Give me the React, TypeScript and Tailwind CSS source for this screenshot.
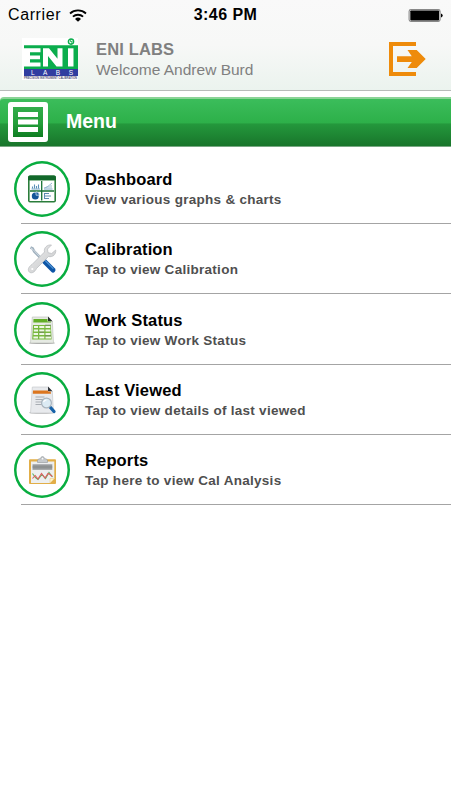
import type { ReactNode } from "react";

type MenuEntry = {
  title: string;
  subtitle: string;
  icon: ReactNode;
};

const DashboardIcon = () => (
  <svg width="56" height="56" viewBox="0 0 56 56" className="block">
    <rect x="14" y="14.500" width="28" height="27" rx="2" fill="#2b7d3b" />
    <path d="M14 19v-2.500q0-2 2-2h24q2 0 2 2V19z" fill="#12682a" />
    <rect x="15.600" y="19.500" width="24.800" height="20.500" fill="#fff" />
    <path d="M27.700 20v19.500M16 30h24" stroke="#197235" strokeWidth="1.300" />
    <path d="M18.500 27.500v-2M20.500 27.500v-4M22.500 27.500v-2.500M24.500 27.500v-4" stroke="#5b8fb8" strokeWidth="1.100" />
    <path d="M17.500 28h8.500M30 28h8.500" stroke="#5c8fb8" strokeWidth=".8" />
    <path d="M30 27l3-1 2-1.500 3-2.500M33 27v-1.500M35 27v-2M37 27v-3" stroke="#7ba5c2" strokeWidth=".8" fill="none" />
    <circle cx="21.300" cy="35" r="3.500" fill="#14559a" />
    <path d="M22 34.200v-3.400a3.500 3.500 0 0 1 3.400 3.400z" fill="#1c61a6" stroke="#fff" strokeWidth=".6" />
    <path d="M30.500 32v6M31 32.500h4M31 35h6M31 37.500h4" stroke="#5d8bb0" strokeWidth="1" />
  </svg>
);

const CalibrationIcon = () => (
  <svg width="56" height="56" viewBox="0 0 56 56" className="block">
    <defs>
      <linearGradient id="wrench" x1="0" y1="0" x2="1" y2="1">
        <stop offset="0" stopColor="#ededed" />
        <stop offset="1" stopColor="#c6c8ca" />
      </linearGradient>
    </defs>
    <path d="M16.500 16.500l2.200 1 1.500 3 9 9" stroke="#9eafbd" strokeWidth="2.600" fill="none" />
    <path d="M17 17l2 1.500 9.500 10" stroke="#dce4ea" strokeWidth=".9" fill="none" />
    <path d="M30 30l9 9" stroke="#0d55a6" strokeWidth="5" strokeLinecap="round" />
    <path d="M31 29.300l8 8" stroke="#5195d5" strokeWidth="1.200" strokeLinecap="round" />
    <path
      d="M37.500 14c-4.500-.6-8 3-7 7L18 33.500c-4 2.500-4.500 6-2.500 7.700 2.200 1.500 5.300 0 7-3.700L34.500 25.500c4.200 1 7.700-2 7.200-6.500l-4 3.500-3.700-.800-.5-3.700z"
      fill="url(#wrench)"
      stroke="#b6b9bb"
      strokeWidth=".7"
    />
    <circle cx="18.300" cy="38" r="1.100" fill="#fff" />
  </svg>
);

const WorkStatusIcon = () => (
  <svg width="56" height="56" viewBox="0 0 56 56" className="block">
    <ellipse cx="28" cy="41" rx="13" ry="1" fill="#aaa" />
    <path d="M18.300 15H34l4.300 4.300L39.500 41h-23z" fill="#e6eae3" stroke="#b8bdb5" strokeWidth=".6" />
    <path d="M34 14.500v4.800h4.500z" fill="#28312d" />
    <path d="M19.500 17h14v2.500h3.500v1H19.300z" fill="#62ae28" />
    <path d="M19 23h17.800l.8 14.500H18.200z" fill="#78b83e" />
    <path d="M20 24h4v2h-4zM25.300 24h5v2h-5zM31.500 24h4.700v2h-4.700zM19.800 27.500H24v2h-4.200zM25.300 27.500h5v2h-5zM31.500 27.500h5v2h-5zM19.600 31H24v2h-4.400zM25.300 31h5v2h-5zM31.500 31h5v2h-5zM19.400 34.500H24v2h-4.600zM25.300 34.500h5v2h-5zM31.500 34.500h5.500v2h-5.500z" fill="#eff7e7" />
    <path d="M31 23.200h6M25 30.200h5M31 33.800h6" stroke="#718067" strokeWidth=".8" />
  </svg>
);

const LastViewedIcon = () => (
  <svg width="56" height="56" viewBox="0 0 56 56" className="block">
    <ellipse cx="27.500" cy="40.800" rx="12.500" ry="1" fill="#b7b7b7" />
    <path d="M18.300 15H34l4.300 4.300L39.500 41h-23z" fill="#e8eaed" stroke="#c1c4c8" strokeWidth=".6" />
    <path d="M34 14.500v4.800h4.500z" fill="#30343a" />
    <path d="M19 18.500h15v1h2.700l.3 2.300H18.800z" fill="#dc761f" />
    <path d="M21.500 25h9M21.500 27.500h8M21.500 30h7M21.500 32.500h7" stroke="#a8adb3" strokeWidth="1" />
    <path d="M36.500 35.500l3.500 4" stroke="#1762a8" strokeWidth="3.300" strokeLinecap="round" />
    <circle cx="32.500" cy="31" r="4.900" fill="#dcebf4" stroke="#a9b4bd" strokeWidth="1.200" />
    <path d="M29.500 30q1-2 3-2" stroke="#fff" strokeWidth="1.200" fill="none" />
  </svg>
);

const ReportsIcon = () => (
  <svg width="56" height="56" viewBox="0 0 56 56" className="block">
    <rect x="15" y="17.200" width="27" height="24.800" rx="1" fill="#e2ae48" />
    <path d="M17 19.500h23.300v17L36 41H17z" fill="#edeff0" />
    <path d="M36 41v-4.500h4.500z" fill="#fff4c9" stroke="#eac777" strokeWidth=".5" />
    <path d="M23.500 20.500v-2.500l1.500-1.200h1.500q.2-2.300 2-2.300t2 2.300H32l1.500 1.200v2.500z" fill="#c6cacd" stroke="#92979b" strokeWidth=".6" />
    <circle cx="28.500" cy="16.800" r=".8" fill="#fff" />
    <path d="M18.500 22.300h19.800v5.500H18.500z" fill="#979a9c" />
    <path d="M18.500 25h19.800" stroke="#7d8183" strokeWidth=".7" />
    <path d="M18.500 31.500l3 4 2.500 2 4-5 3.500 4 3.500-6 3.500 4.500" stroke="#5fb565" strokeWidth="1.100" fill="none" />
    <path d="M18.500 36.500l2.700-3 2.800 3.500 3.500-5.500 3.500 4.500 3-4.500 2 1 2.300 2" stroke="#e05d5f" strokeWidth="1.100" fill="none" />
  </svg>
);

const entries: MenuEntry[] = [
  { title: "Dashboard", subtitle: "View various graphs & charts", icon: <DashboardIcon /> },
  { title: "Calibration", subtitle: "Tap to view Calibration", icon: <CalibrationIcon /> },
  { title: "Work Status", subtitle: "Tap to view Work Status", icon: <WorkStatusIcon /> },
  { title: "Last Viewed", subtitle: "Tap to view details of last viewed", icon: <LastViewedIcon /> },
  { title: "Reports", subtitle: "Tap here to view Cal Analysis", icon: <ReportsIcon /> },
];

const StatusBar = () => (
  <div className="grid h-[30px] grid-cols-3 items-center pl-2 pr-[8px] text-[16px] leading-[30px] text-black">
    <div className="flex items-center gap-[8px]">
      <span className="tracking-[0.6px]">Carrier</span>
      <svg width="18" height="13" viewBox="0 0 18 13">
        <path d="M1 4.500a12 12 0 0 1 16 0M3.900 7.700a7.600 7.600 0 0 1 10.200 0" fill="none" stroke="#000" strokeWidth="1.800" />
        <path d="M6 9.900a4.300 4.300 0 0 1 6 0L9 12.700z" />
      </svg>
    </div>
    <span className="text-center font-bold tracking-[0.45px]">3:46 PM</span>
    <svg width="35" height="13" viewBox="0 0 35 13" className="justify-self-end">
      <rect x="1.100" y=".6" width="31" height="11.800" rx="1.800" fill="#fff" stroke="#888" strokeWidth="1.100" />
      <rect x="2.300" y="1.500" width="28.800" height="10" rx=".8" />
      <path d="M33 4.500q1.700.3 1.700 2t-1.700 2z" />
    </svg>
  </div>
);

const Logo = () => (
  <svg width="56" height="42" viewBox="0 0 56 42" className="block shrink-0 overflow-visible" fontFamily="Liberation Sans, Arial, sans-serif">
    <rect width="56" height="42" fill="#fff" />
    <path d="M2 7.300h54V31H2z" fill="#0bad4d" />
    <path d="M2 10.300h16.500v4H8v3.200h10v3.800H8v3.200h10.500v4H2z" fill="#fff" />
    <path d="M21 28.500V10.300h6l8.500 10.500V10.300h5v18.200h-6L26 18v10.500z" fill="#fff" />
    <path d="M46 10.300h5.500v18.200H46z" fill="#fff" />
    <circle cx="49" cy="3.600" r="2.600" fill="none" stroke="#0bad4d" strokeWidth="1.400" />
    <path d="M49.200 1l-1 2.500h2l-1.200 3" stroke="#0bad4d" strokeWidth=".8" fill="none" />
    <path d="M2 31h54v7H2z" fill="#303da0" />
    <text x="9" y="36.800" fontSize="6.500" fill="#fff" textLength="42" lengthAdjust="spacing">LABS</text>
    <text x="2" y="41" fontSize="3.200" fontWeight="bold" fill="#555477" textLength="53" lengthAdjust="spacingAndGlyphs">PRECISION INSTRUMENT CALIBRATION</text>
  </svg>
);

const Header = () => (
  <header className="h-[91px] border-b border-[#b8bcba] bg-linear-to-b from-[#f9f9f9] via-[#f7f8f7] to-[#ebf3ee]">
    <StatusBar />
    <div className="flex pl-[22px] pr-[25px] pt-2">
      <Logo />
      <div className="ml-[18px] grow text-[#808080]">
        <h1 className="pt-px text-[16.5px] font-bold leading-[21px] tracking-[0.15px]">ENI LABS</h1>
        <p className="text-[15.5px] leading-[19px]">Welcome Andrew Burd</p>
      </div>
      <button className="mt-1 h-[34px]" aria-label="Log out">
        <svg width="37" height="34" viewBox="0 0 37 34" fill="#ee8b0b">
          <path d="M0 0h27v4H4v26h23v4H0z" />
          <path d="M8 14.300h14.800L18.500 8h9.200l9 9-9 9h-9.200l4.300-6H8z" />
        </svg>
      </button>
    </div>
  </header>
);

const MenuBar = () => (
  <div className="mt-[6px] flex h-[50px] items-center rounded-tl-[4px] border-b border-t-2 border-b-[#79a883] border-t-[#8bd397] bg-[linear-gradient(to_bottom,#3bbd5b_0%,#2db049_51%,#24983c_53%,#19752b_100%)] pl-2">
    <button className="-mt-[2px] flex size-10 items-center justify-center rounded-[3px] bg-white" aria-label="Toggle menu">
      <svg width="30" height="30" viewBox="0 0 30 30">
        <defs>
          <linearGradient id="menuFill" x1="0" y1="0" x2="0" y2="1">
            <stop offset="0" stopColor="#32ad4b" />
            <stop offset=".55" stopColor="#239e39" />
            <stop offset="1" stopColor="#0f7d22" />
          </linearGradient>
        </defs>
        <path d="M0 0h30v30H0z" fill="url(#menuFill)" />
        <path d="M5 5h20v5H5zM5 12.500h20v5H5zM5 20h20v5H5z" fill="#fff" />
      </svg>
    </button>
    <h2 className="-mt-[3px] ml-[18px] text-[19.500px] font-bold leading-6 text-white">Menu</h2>
  </div>
);

const MenuRow = ({ title, subtitle, icon }: MenuEntry) => (
  <li className="h-[70.400px] pl-[14px] pt-[7.500px]">
    <div className="flex h-[62.100px]">
      <div className="size-14 shrink-0 rounded-full shadow-[inset_0_0_0_2.5px_#08ad3f]">{icon}</div>
      <div className="ml-[15px] pt-[7px]">
        <h3 className="text-[16.5px] font-bold leading-[22px] tracking-[0.15px] text-black">{title}</h3>
        <p className="text-[13.5px] font-bold leading-[20px] tracking-[0.28px] text-[#4f4f4f]">{subtitle}</p>
      </div>
    </div>
    <div className="ml-[7px] h-px bg-[#a4a4a4]" />
  </li>
);

export default function App() {
  return (
    <div className="h-[800px] w-[451px] overflow-hidden bg-white font-['Liberation_Sans',Arial,sans-serif]">
      <Header />
      <MenuBar />
      <ul className="pt-[6.300px]">
        {entries.map((entry) => (
          <MenuRow key={entry.title} {...entry} />
        ))}
      </ul>
    </div>
  );
}
